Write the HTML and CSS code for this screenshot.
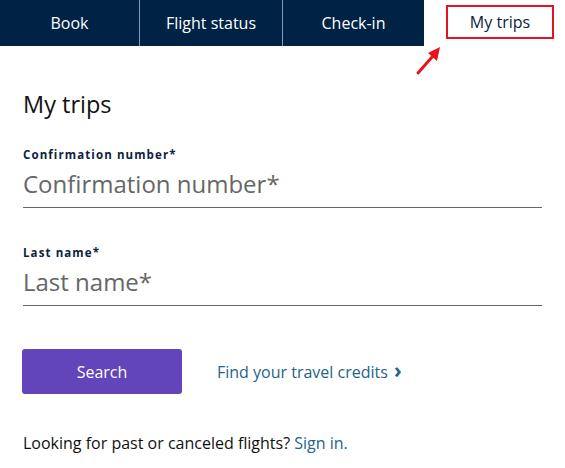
FILE: index.html
```html
<!DOCTYPE html>
<html lang="en">
<head>
<meta charset="UTF-8" />
<meta name="viewport" content="width=device-width, initial-scale=1" />
<title>My trips</title>
<link rel="stylesheet" href="styles.css">
</head>
<body>

<nav class="tabs">
  <a class="tab">Book</a>
  <a class="tab">Flight status</a>
  <a class="tab">Check-in</a>
  <a class="tab active"><span class="highlight">My trips</span></a>
  <svg class="arrow" width="30" height="32" viewBox="0 0 30 32">
    <line x1="3" y1="29" x2="18" y2="12" stroke="#e8141c" stroke-width="3" stroke-linecap="round" />
    <polygon points="25,3 13,9 22,17" fill="#e8141c" />
  </svg>
</nav>

<main class="panel">
  <h1>My trips</h1>

  <div class="field">
    <label for="conf">Confirmation number*</label>
    <input id="conf" type="text" placeholder="Confirmation number*">
  </div>

  <div class="field">
    <label for="lname">Last name*</label>
    <input id="lname" type="text" placeholder="Last name*">
  </div>

  <div class="actions">
    <button class="btn-search">Search</button>
    <a class="link">Find your travel credits <span class="chev">&#x203A;</span></a>
  </div>

  <p class="past">Looking for past or canceled flights? <a class="link">Sign in.</a></p>
</main>

</body>
</html>
```

FILE: styles.css
```css
body {
  margin: 0;
  font-family: "Open Sans", "Noto Sans", sans-serif;
  background: #fff;
  color: #111;
}

/* Onglets du haut */
.tabs {
  position: relative;
  display: grid;
  grid-template-columns: 139px 143px 142px 1fr;
  height: 46px;
  background: #002244;
}
.tab {
  display: flex;
  justify-content: center;
  align-items: center;
  color: #fff;
  font-size: 16px;
  border-left: 1px solid #8b9ab3;
}
.tab:first-child {
  border-left: none;
}
.tab.active {
  background: #fff;
  color: #0c2340;
  border-left: none;
  justify-content: flex-start;
}
.highlight {
  display: flex;
  justify-content: center;
  align-items: center;
  width: 104px;
  height: 30px;
  border: 2px solid #e3141f;
  margin-left: 22px;
  margin-bottom: 2px;
}
.arrow {
  position: absolute;
  left: 415px;
  top: 44px;
}

/* Formulaire */
.panel {
  padding: 42px 23px 0 23px;
}
h1 {
  margin: 0 0 27px;
  font-size: 23.5px;
  font-weight: 400;
  color: #111;
}
.field {
  display: flex;
  flex-direction: column;
  width: 519px;
  margin-bottom: 37px;
}
.field label {
  font-size: 11.5px;
  font-weight: 700;
  letter-spacing: 1.1px;
  color: #0c2340;
}
.field input {
  font-family: inherit;
  font-size: 24px;
  border: none;
  border-bottom: 1px solid #666;
  padding: 4px 0 7px;
  margin-top: 1px;
  outline: none;
  color: #333;
}
.field input::placeholder {
  color: #666;
}

.actions {
  display: flex;
  align-items: center;
  gap: 35px;
  margin-top: 43px;
  margin-left: -1px;
}
.btn-search {
  width: 160px;
  height: 45px;
  background: #6244bb;
  color: #fff;
  border: none;
  border-radius: 3px;
  font-family: inherit;
  font-size: 16px;
  cursor: pointer;
}
.link {
  color: #25638a;
  font-size: 16px;
  text-decoration: none;
}
.chev {
  font-weight: 700;
  font-size: 21px;
  line-height: 1;
  margin-left: 2px;
}
.past {
  margin: 38px 0 0;
  font-size: 16px;
  color: #111;
}
```
